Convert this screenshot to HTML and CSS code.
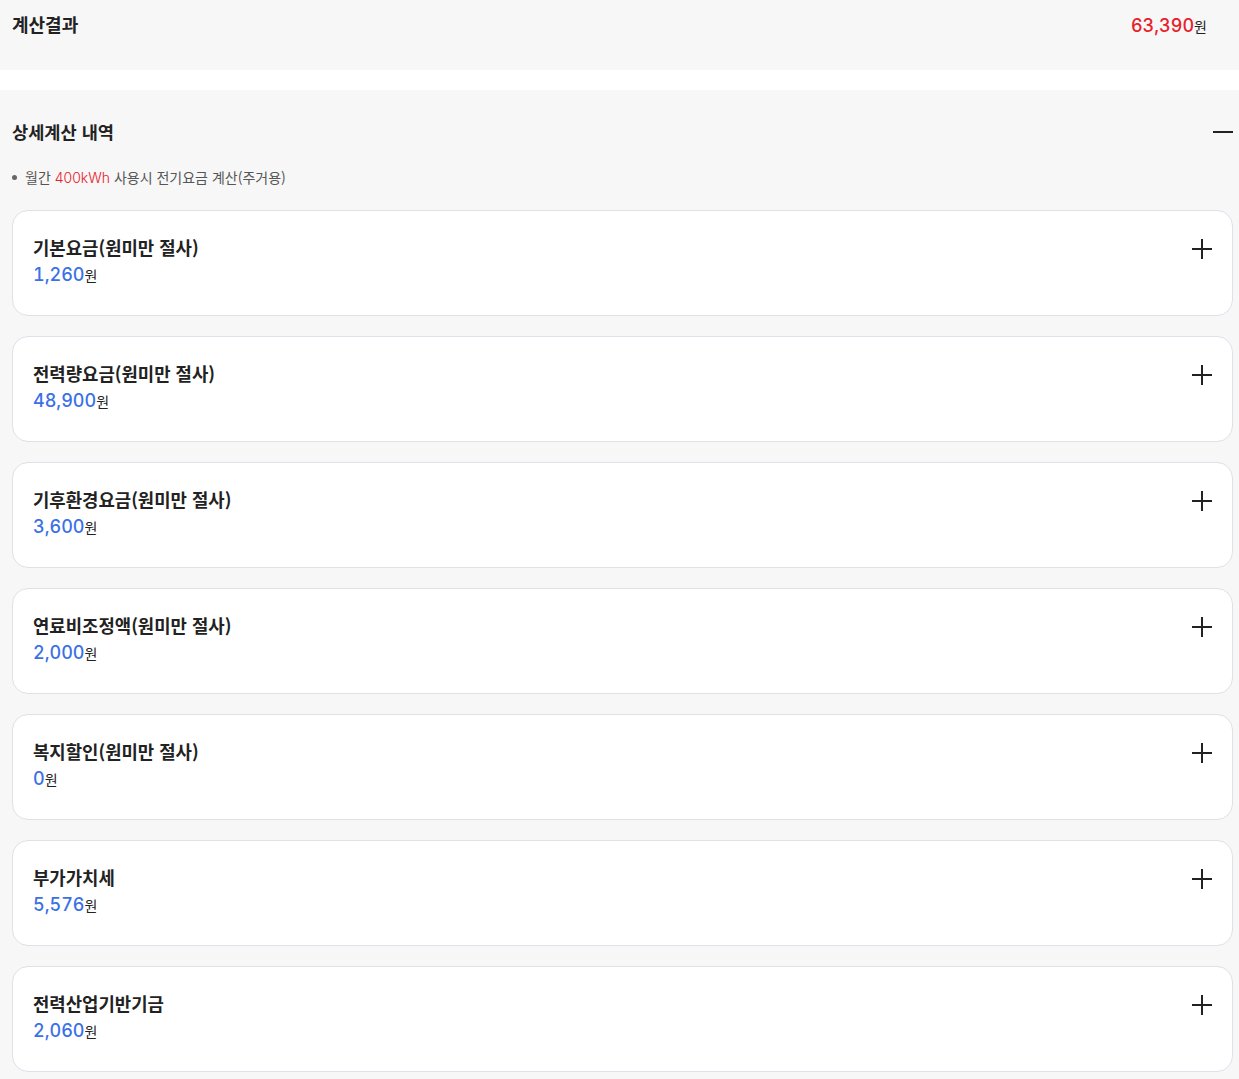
FILE: index.html
```html
<!DOCTYPE html>
<html lang="ko">
<head>
<meta charset="utf-8">
<link rel="stylesheet" href="styles.css">
</head>
<body>
<section class="result">
  <h2 class="result-title">계산결과</h2>
  <div class="result-total"><span class="num">63,390</span><span class="unit">원</span></div>
</section>
<section class="detail">
  <div class="detail-head">
    <h2 class="detail-title">상세계산 내역</h2>
    <svg class="icon" width="20" height="20" viewBox="0 0 20 20"><path d="M0 10H20" stroke="#222" stroke-width="2"/></svg>
  </div>
  <ul class="notes">
    <li>월간 <span class="red">400kWh</span> 사용시 전기요금 계산(주거용)</li>
  </ul>
  <div class="cards">
    <div class="card"><div class="card-body"><div class="card-title">기본요금(원미만 절사)</div><div class="card-amount"><span class="num">1,260</span><span class="unit">원</span></div></div><svg class="icon plus" width="20" height="20" viewBox="0 0 20 20"><path d="M0 10H20M10 0V20" stroke="#222" stroke-width="2"/></svg></div>
    <div class="card"><div class="card-body"><div class="card-title">전력량요금(원미만 절사)</div><div class="card-amount"><span class="num">48,900</span><span class="unit">원</span></div></div><svg class="icon plus" width="20" height="20" viewBox="0 0 20 20"><path d="M0 10H20M10 0V20" stroke="#222" stroke-width="2"/></svg></div>
    <div class="card"><div class="card-body"><div class="card-title">기후환경요금(원미만 절사)</div><div class="card-amount"><span class="num">3,600</span><span class="unit">원</span></div></div><svg class="icon plus" width="20" height="20" viewBox="0 0 20 20"><path d="M0 10H20M10 0V20" stroke="#222" stroke-width="2"/></svg></div>
    <div class="card"><div class="card-body"><div class="card-title">연료비조정액(원미만 절사)</div><div class="card-amount"><span class="num">2,000</span><span class="unit">원</span></div></div><svg class="icon plus" width="20" height="20" viewBox="0 0 20 20"><path d="M0 10H20M10 0V20" stroke="#222" stroke-width="2"/></svg></div>
    <div class="card"><div class="card-body"><div class="card-title">복지할인(원미만 절사)</div><div class="card-amount"><span class="num">0</span><span class="unit">원</span></div></div><svg class="icon plus" width="20" height="20" viewBox="0 0 20 20"><path d="M0 10H20M10 0V20" stroke="#222" stroke-width="2"/></svg></div>
    <div class="card"><div class="card-body"><div class="card-title">부가가치세</div><div class="card-amount"><span class="num">5,576</span><span class="unit">원</span></div></div><svg class="icon plus" width="20" height="20" viewBox="0 0 20 20"><path d="M0 10H20M10 0V20" stroke="#222" stroke-width="2"/></svg></div>
    <div class="card"><div class="card-body"><div class="card-title">전력산업기반기금</div><div class="card-amount"><span class="num">2,060</span><span class="unit">원</span></div></div><svg class="icon plus" width="20" height="20" viewBox="0 0 20 20"><path d="M0 10H20M10 0V20" stroke="#222" stroke-width="2"/></svg></div>
  </div>
</section>
</body>
</html>
```
FILE: styles.css
```css
html, body {
  margin: 0;
  padding: 0;
  background: #fff;
  font-family: "Noto Sans CJK KR", "Noto Sans", sans-serif;
  color: #222;
}
h2 { margin: 0; }

.result {
  background: #f7f7f7;
  height: 70px;
  box-sizing: border-box;
  display: flex;
  justify-content: space-between;
  align-items: flex-start;
  padding: 12px 32px 0 12px;
  margin-bottom: 20px;
}
.result-title {
  font-size: 18px;
  font-weight: 700;
  line-height: 24px;
}
.result-total {
  line-height: 26px;
}
.result-total .num {
  color: #e8202a;
  font-size: 18px;
  font-weight: 500;
  font-family: Inter, "Noto Sans", sans-serif;
  font-variant-numeric: tabular-nums;
}
.result-total .unit {
  font-size: 14px;
  color: #222;
}

.detail {
  background: #f7f7f7;
  padding: 30px 6px 8px 12px;
}
.detail-head {
  display: flex;
  justify-content: space-between;
  align-items: center;
}
.detail-title {
  font-size: 17.6px;
  font-weight: 700;
  line-height: 24px;
}
.notes {
  list-style: none;
  margin: 23px 0 23px 0;
  padding: 0;
}
.notes li {
  font-size: 14px;
  line-height: 20px;
  height: 20px;
  color: #555;
  padding-left: 13px;
  position: relative;
}
.notes li::before {
  content: "";
  position: absolute;
  left: 0;
  top: 8px;
  width: 5px;
  height: 5px;
  border-radius: 50%;
  background: #666;
}
.red {
  color: #e8202a;
  font-family: Inter, "Noto Sans", sans-serif;
  font-weight: 300;
}

.cards {
  display: flex;
  flex-direction: column;
  gap: 20px;
}
.card {
  background: #fff;
  border: 1px solid #dde1e8;
  border-radius: 16px;
  height: 106px;
  box-sizing: border-box;
  padding: 24px 20px 0 20px;
  display: flex;
  justify-content: space-between;
  align-items: flex-start;
}
.card-title {
  font-size: 17.8px;
  font-weight: 700;
  line-height: 24px;
}
.card-amount {
  margin-top: 3px;
  line-height: 24px;
}
.card-amount .num {
  color: #3a71e6;
  font-size: 18px;
  font-weight: 500;
  font-family: Inter, "Noto Sans", sans-serif;
  font-variant-numeric: tabular-nums;
}
.card-amount .unit {
  font-size: 14px;
  color: #222;
}
.icon.plus { margin-top: 4px; }
.icon { display: block; flex: none; }
```
